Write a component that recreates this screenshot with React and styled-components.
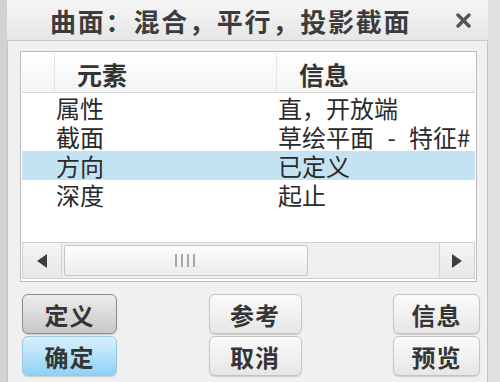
import React from 'react';
import styled, { createGlobalStyle } from 'styled-components';

const GlobalStyle = createGlobalStyle`
  html, body {
    margin: 0;
    padding: 0;
    background: #ffffff;
  }
  body {
    font-family: "Noto Sans CJK SC", "Noto Sans", sans-serif;
  }
`;

const Frame = styled.div`
  width: 500px;
  height: 382px;
  box-sizing: border-box;
  display: flex;
  flex-direction: column;
  background: #f0f0f0;
  border-left: 7px solid #d2d2d2;
  border-right: 12px solid #e2e2e2;
  box-shadow: inset 1px 0 0 #c4c4c4, inset -1px 0 0 #c4c4c4;
  overflow: hidden;
`;

const TitleBar = styled.div`
  height: 41px;
  flex: none;
  box-sizing: border-box;
  display: flex;
  align-items: center;
  justify-content: space-between;
  padding: 0 17px 0 43px;
  background: linear-gradient(#f6f6f6, #e6e6e6);
  border-bottom: 1px solid #cacaca;
`;

const Title = styled.div`
  font-size: 26px;
  font-weight: 700;
  color: #3c3c3c;
  letter-spacing: 1.8px;
  line-height: 1;
  padding-top: 2px;
  white-space: nowrap;
`;

const CloseIcon = () => (
  <svg width="15" height="15" viewBox="0 0 15 15">
    <path d="M2 2 L13 13 M13 2 L2 13" stroke="#555" strokeWidth="3.4" strokeLinecap="round" />
  </svg>
);

const Body = styled.div`
  flex: 1;
  display: flex;
  flex-direction: column;
  padding: 10px 11px 4px 13px;
`;

const ListBox = styled.div`
  height: 231px;
  flex: none;
  box-sizing: border-box;
  border: 1px solid #bcbcbc;
  background: #ffffff;
  padding: 1px;
  display: flex;
  flex-direction: column;
`;

const Table = styled.div`
  flex: 1;
`;

const HeaderRow = styled.div`
  display: grid;
  grid-template-columns: 33px 222px 1fr;
  height: 40px;
  box-sizing: border-box;
  background: linear-gradient(#ffffff, #f3f3f3);
  border-bottom: 1px solid #d4d4d4;
`;

const HeaderCell = styled.div`
  display: flex;
  align-items: center;
  padding-left: 22px;
  padding-top: 3px;
  font-size: 25px;
  font-weight: 700;
  color: #333;
  border-right: 1px solid ${p => (p.$last ? 'transparent' : '#e4e4e4')};
`;

const Row = styled.div`
  display: grid;
  grid-template-columns: 33px 222px 1fr;
  height: 29px;
  align-items: center;
  background: ${p => (p.$selected ? '#c3e2f2' : 'transparent')};
  font-size: 24px;
  line-height: 29px;
  color: #2a2a2a;
  white-space: nowrap;
  word-spacing: 8px;
`;

const Cell = styled.div`
  padding-left: 1px;
  overflow-x: clip;
`;

const ScrollBar = styled.div`
  height: 37px;
  flex: none;
  display: flex;
  align-items: stretch;
  background: #efefef;
  border: 1px solid #cfcfcf;
  box-sizing: border-box;
  margin-bottom: 1px;
`;

const ArrowButton = styled.div`
  width: ${p => p.$w}px;
  flex: none;
  display: flex;
  align-items: center;
  justify-content: center;
  background: linear-gradient(#f4f4f4, #e8e8e8);
  border-${p => (p.$side === 'left' ? 'right' : 'left')}: 1px solid #d2d2d2;
`;

const Thumb = styled.div`
  width: 244px;
  margin: 2px;
  box-sizing: border-box;
  border: 1px solid #c6c6c6;
  border-radius: 2px;
  background: linear-gradient(#fdfdfd, #ececec);
  display: flex;
  align-items: center;
  justify-content: center;
`;

const Track = styled.div`
  flex: 1;
`;

const Grip = () => (
  <svg width="24" height="13" viewBox="0 0 24 13">
    {[1, 7, 13, 19].map(x => (
      <rect key={x} x={x} y="0" width="2" height="13" fill="#a8a8a8" />
    ))}
  </svg>
);

const Triangle = ({ dir }) => (
  <svg width="10" height="14" viewBox="0 0 10 14">
    <path d={dir === 'left' ? 'M10 0 L0 7 L10 14 Z' : 'M0 0 L10 7 L0 14 Z'} fill="#3e3e3e" />
  </svg>
);

const Buttons = styled.div`
  margin-top: 12px;
  margin-left: 2px;
  width: 458px;
  display: grid;
  grid-template-columns: 95px 93px 87px;
  justify-content: space-between;
  row-gap: 2px;
`;

const variants = {
  pressed: {
    bg: 'linear-gradient(#ececec, #c9c9c9)',
    border: '#8c8c8c',
  },
  primary: {
    bg: 'linear-gradient(#d9f1fd, #8fd1f5)',
    border: '#9cc8e0',
  },
  normal: {
    bg: 'linear-gradient(#fbfbfb, #e6e6e6)',
    border: '#c4c4c4',
  },
};

const Button = styled.div`
  height: 40px;
  box-sizing: border-box;
  display: flex;
  align-items: center;
  justify-content: center;
  border-radius: 6px;
  border: 1px solid ${p => variants[p.$variant].border};
  background: ${p => variants[p.$variant].bg};
  box-shadow: 0 1px 1px rgba(0, 0, 0, 0.15);
  font-size: 24px;
  font-weight: 700;
  color: #353535;
  letter-spacing: 1px;
`;

const rows = [
  ['属性', '直，开放端'],
  ['截面', '草绘平面 - 特征#'],
  ['方向', '已定义'],
  ['深度', '起止'],
];

export default function App() {
  return (
    <>
      <GlobalStyle />
      <Frame>
        <TitleBar>
          <Title>曲面：混合，平行，投影截面</Title>
          <CloseIcon />
        </TitleBar>
        <Body>
          <ListBox>
            <Table>
              <HeaderRow>
                <HeaderCell />
                <HeaderCell>元素</HeaderCell>
                <HeaderCell $last>信息</HeaderCell>
              </HeaderRow>
              {rows.map(([name, info], i) => (
                <Row key={name} $selected={i === 2}>
                  <Cell />
                  <Cell>{name}</Cell>
                  <Cell>{info}</Cell>
                </Row>
              ))}
            </Table>
            <ScrollBar>
              <ArrowButton $w={38} $side="left">
                <Triangle dir="left" />
              </ArrowButton>
              <Thumb>
                <Grip />
              </Thumb>
              <Track />
              <ArrowButton $w={34} $side="right">
                <Triangle dir="right" />
              </ArrowButton>
            </ScrollBar>
          </ListBox>
          <Buttons>
            <Button $variant="pressed">定义</Button>
            <Button $variant="normal">参考</Button>
            <Button $variant="normal">信息</Button>
            <Button $variant="primary">确定</Button>
            <Button $variant="normal">取消</Button>
            <Button $variant="normal">预览</Button>
          </Buttons>
        </Body>
      </Frame>
    </>
  );
}
